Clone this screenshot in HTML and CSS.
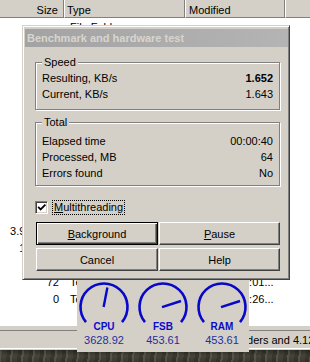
FILE: index.html
```html
<!DOCTYPE html>
<html>
<head>
<meta charset="utf-8">
<title>Benchmark and hardware test</title>
<link rel="stylesheet" href="styles.css">
</head>
<body>
<div class="explorer">
  <div class="lv-header">
    <div class="hcell c-size">Size</div>
    <div class="hcell c-type">Type</div>
    <div class="hcell c-mod">Modified</div>
    <div class="hcell c-rest"></div>
  </div>
  <div class="lv-body">
    <div class="lv-row"><span class="c-size"></span><span class="c-type">File Folder</span><span class="c-mod"></span></div>
    <div class="lv-row"><span class="c-size"></span><span class="c-type">File Folder</span><span class="c-mod"></span></div>
    <div class="lv-row"><span class="c-size"></span><span class="c-type">File Folder</span><span class="c-mod"></span></div>
    <div class="lv-row"><span class="c-size"></span><span class="c-type">File Folder</span><span class="c-mod"></span></div>
    <div class="lv-row"><span class="c-size"></span><span class="c-type">File Folder</span><span class="c-mod"></span></div>
    <div class="lv-row"><span class="c-size"></span><span class="c-type">File Folder</span><span class="c-mod"></span></div>
    <div class="lv-row"><span class="c-size"></span><span class="c-type">File Folder</span><span class="c-mod"></span></div>
    <div class="lv-row"><span class="c-size"></span><span class="c-type">File Folder</span><span class="c-mod"></span></div>
    <div class="lv-row"><span class="c-size"></span><span class="c-type">File Folder</span><span class="c-mod"></span></div>
    <div class="lv-row"><span class="c-size"></span><span class="c-type">File Folder</span><span class="c-mod"></span></div>
    <div class="lv-row"><span class="c-size"></span><span class="c-type">File Folder</span><span class="c-mod"></span></div>
    <div class="lv-row"><span class="c-size"></span><span class="c-type">File Folder</span><span class="c-mod"></span></div>
    <div class="lv-row"><span class="c-size">3.915.264</span><span class="c-type">Application</span><span class="c-mod">6.3.2005 10:01...</span></div>
    <div class="lv-row"><span class="c-size">163.840</span><span class="c-type">Application Extension</span><span class="c-mod">6.3.2005 10:01...</span></div>
    <div class="lv-row"><span class="c-size">8.192</span><span class="c-type">Help File</span><span class="c-mod">6.3.2005 10:01...</span></div>
    <div class="lv-row"><span class="c-size">72</span><span class="c-type">Text Document</span><span class="c-mod">6.3.2005 10:01...</span></div>
    <div class="lv-row"><span class="c-size">0</span><span class="c-type">Text Document</span><span class="c-mod">6.3.2005 12:26...</span></div>
  </div>
  <div class="statusbar">
    <div class="sb-panel"><span class="sb-text">17 objects, 2 folders and 4.12 MB</span></div>
  </div>
  <div class="desktop"></div>
</div>

<div class="dialog">
  <div class="titlebar">Benchmark and hardware test</div>
  <div class="client">
    <div class="group group-speed">
      <div class="group-label">Speed</div>
      <div class="group-rows">
        <div class="row"><span>Resulting, KB/s</span><b>1.652</b></div>
        <div class="row"><span>Current, KB/s</span><span>1.643</span></div>
      </div>
    </div>
    <div class="group group-total">
      <div class="group-label">Total</div>
      <div class="group-rows">
        <div class="row"><span>Elapsed time</span><span>00:00:40</span></div>
        <div class="row"><span>Processed, MB</span><span>64</span></div>
        <div class="row"><span>Errors found</span><span>No</span></div>
      </div>
    </div>
    <div class="check">
      <span class="box"><svg width="11" height="11" viewBox="0 0 11 11"><path d="M2 4.5 L4 6.5 L8.5 2" fill="none" stroke="#000" stroke-width="2" stroke-linecap="square"/></svg></span>
      <span class="check-label"><u>M</u>ultithreading</span>
    </div>
    <div class="buttons">
      <button class="btn btn-default"><u>B</u>ackground</button>
      <button class="btn"><u>P</u>ause</button>
      <button class="btn">Cancel</button>
      <button class="btn">Help</button>
    </div>
  </div>
</div>

<div class="gauges">
  <div class="gauge">
    <svg class="dial" width="56" height="41" viewBox="0 0 56 41">
      <path d="M10 42.1 A23.5 23.5 0 1 1 46 42.1" fill="none" stroke="#0808c8" stroke-width="2.6"/>
      <line x1="27.6" y1="27" x2="31.4" y2="7.6" stroke="#0808c8" stroke-width="2.4"/>
    </svg>
    <div class="g-name">CPU</div>
    <div class="g-val">3628.92</div>
  </div>
  <div class="gauge">
    <svg class="dial" width="56" height="41" viewBox="0 0 56 41">
      <path d="M10 42.1 A23.5 23.5 0 1 1 46 42.1" fill="none" stroke="#0808c8" stroke-width="2.6"/>
      <line x1="27" y1="27.2" x2="46" y2="21" stroke="#0808c8" stroke-width="2.4"/>
    </svg>
    <div class="g-name">FSB</div>
    <div class="g-val">453.61</div>
  </div>
  <div class="gauge">
    <svg class="dial" width="56" height="41" viewBox="0 0 56 41">
      <path d="M10 42.1 A23.5 23.5 0 1 1 46 42.1" fill="none" stroke="#0808c8" stroke-width="2.6"/>
      <line x1="27" y1="27.2" x2="46" y2="21" stroke="#0808c8" stroke-width="2.4"/>
    </svg>
    <div class="g-name">RAM</div>
    <div class="g-val">453.61</div>
  </div>
</div>
</body>
</html>
```
FILE: styles.css
```css
* { box-sizing: border-box; }
html, body { margin: 0; padding: 0; }
body {
  width: 310px;
  height: 362px;
  overflow: hidden;
  position: relative;
  font-family: "Liberation Sans", Arial, sans-serif;
  font-size: 11px;
  color: #000;
  background: #fff;
}

/* ---------- explorer behind ---------- */
.explorer { display: flex; flex-direction: column; height: 362px; }
.lv-header {
  display: grid;
  grid-template-columns: 64px 121px 100px 1fr;
  height: 18px;
  background: #d4d0c8;
}
.hcell {
  border-left: 1px solid #fff;
  border-right: 1px solid #808080;
  border-bottom: 1px solid #808080;
  padding: 4px 2px 0 2px;
  line-height: 13px;
  white-space: nowrap;
  overflow: hidden;
}
.hcell.c-size { border-left: 0; text-align: right; padding-right: 5px; }
.hcell.c-mod { padding-left: 3px; }
.hcell.c-rest { border-right: 0; }

.lv-body { flex: 1; background: #fff; padding-top: 1px; }
.lv-row {
  display: grid;
  grid-template-columns: 64px 121px 100px 1fr;
  height: 17px;
  line-height: 17px;
  white-space: nowrap;
}
.lv-row span { overflow: hidden; }
.lv-row .c-size { text-align: right; padding-right: 5px; }
.lv-row .c-type { padding-left: 6px; }
.lv-row .c-mod { padding-left: 6px; }

.statusbar { height: 24px; background: #d4d0c8; padding: 4px 0 1px; }
.sb-panel {
  height: 19px;
  border-top: 1px solid #808080;
  border-bottom: 1px solid #fff;
  padding: 3px 0 0 170px;
  line-height: 13px;
  white-space: nowrap;
  overflow: hidden;
}
.desktop {
  height: 12px;
  background:
    repeating-linear-gradient(97deg, rgba(255,255,240,0.10) 0 2px, rgba(0,0,0,0) 2px 7px, rgba(0,0,0,0.18) 7px 11px),
    linear-gradient(#2e2d25, #47453a 50%, #3a382e);
}

/* ---------- dialog ---------- */
.dialog {
  position: absolute;
  left: 22px;
  top: 25px;
  width: 268px;
  z-index: 2;
  background: #d4d0c8;
  border: 1px solid;
  border-color: #d4d0c8 #404040 #404040 #d4d0c8;
  box-shadow: inset 1px 1px 0 #fff, inset -1px -1px 0 #808080;
  padding: 3px 1px 2px 2px;
}
.titlebar {
  height: 18px;
  line-height: 18px;
  padding-left: 2px;
  font-weight: bold;
  color: #d8d5cf;
  background: linear-gradient(to right, #a3a3a3, #b4b4b4);
  white-space: nowrap;
}
.client { padding: 15px 8px 6px 10px; }

.group {
  border: 1px solid #808080;
  box-shadow: inset 1px 1px 0 #fff, 1px 1px 0 #fff;
  padding: 0 6px;
}
.group-label {
  display: table;
  margin-top: -7px;
  padding: 0 2px;
  line-height: 13px;
  background: #d4d0c8;
}
.group-speed .group-rows { padding: 1px 0 7px; }
.group-total { margin-top: 12px; }
.group-total .group-rows { padding: 4px 0 4px; }
.row {
  display: flex;
  justify-content: space-between;
  height: 16px;
  line-height: 16px;
}

.check {
  display: flex;
  align-items: center;
  margin-top: 14px;
  height: 15px;
}
.box {
  width: 13px;
  height: 13px;
  border: 1px solid;
  border-color: #808080 #fff #fff #808080;
  background: #fff;
  box-shadow: inset 1px 1px 0 #404040, inset -1px -1px 0 #d4d0c8;
  padding: 0;
  display: flex;
}
.box svg { display: block; margin: 1px 0 0 1px; }
.check-label {
  margin-left: 4px;
  border: 1px dotted #000;
  padding: 0 1px;
  line-height: 13px;
}

.buttons {
  display: grid;
  grid-template-columns: 122px 121px;
  gap: 3px 1px;
  margin-top: 7px;
  margin-left: 1px;
}
.btn {
  font: inherit;
  color: #000;
  height: 23px;
  padding: 0;
  margin: 0;
  background: #d4d0c8;
  border: 1px solid;
  border-color: #fff #404040 #404040 #fff;
  box-shadow: inset -1px -1px 0 #808080;
  border-radius: 0;
}
.btn-default {
  border-color: #000;
  box-shadow: inset 1px 1px 0 #fff, inset -1px -1px 0 #404040, inset -2px -2px 0 #808080;
}

/* ---------- gauges ---------- */
.gauges {
  position: absolute;
  left: 77px;
  top: 278px;
  width: 172px;
  height: 74px;
  z-index: 1;
  background: #d4d0c8;
  padding-top: 2px;
  display: grid;
  grid-template-columns: repeat(3, 59px);
  justify-content: center;
}
.gauge { display: flex; flex-direction: column; align-items: center; }
.dial { display: block; overflow: visible; }
.g-name {
  font-size: 10px;
  font-weight: bold;
  line-height: 12px;
  color: #0a0acc;
}
.g-val {
  margin-top: 1px;
  line-height: 13px;
  color: #1e2e9e;
}
```
